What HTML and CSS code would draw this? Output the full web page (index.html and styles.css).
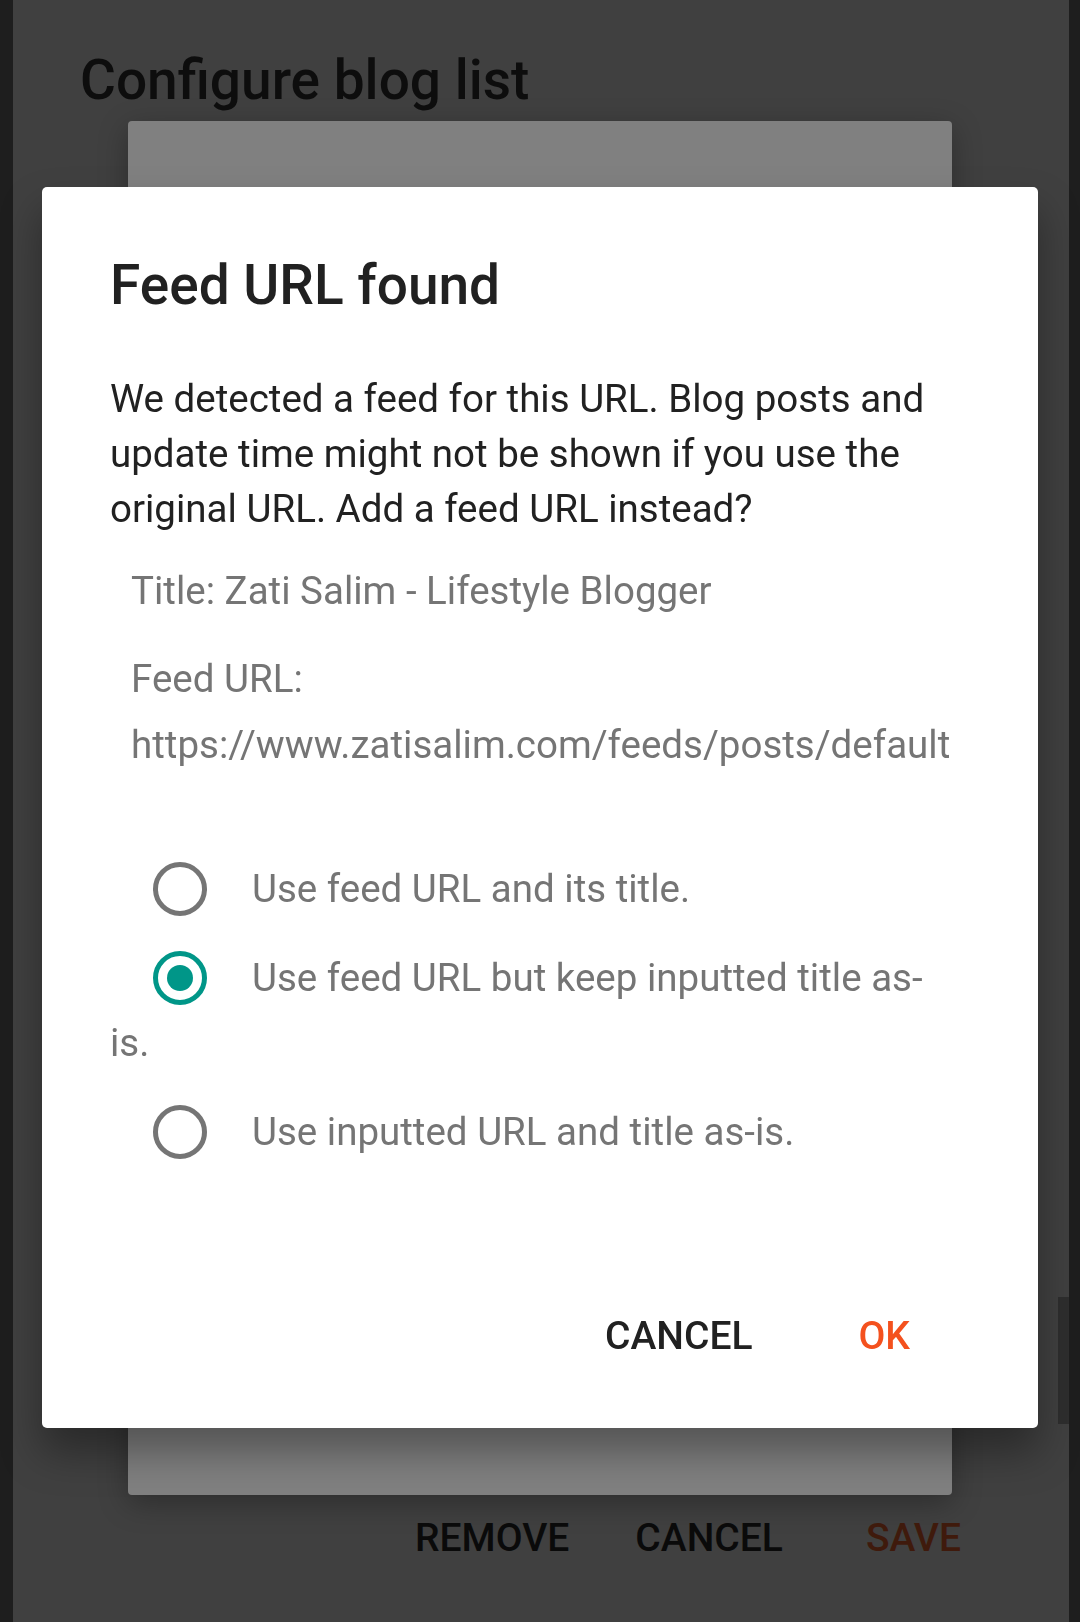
FILE: index.html
```html
<!DOCTYPE html>
<html lang="en">
  <head>
    <meta charset="UTF-8" />
    <meta name="viewport" content="width=device-width, initial-scale=1.0" />
    <title>Configure blog list</title>
    <link rel="stylesheet" href="styles.css">
  </head>
  <body>
    <main class="screen">
      <h1 class="screen-title">Configure blog list</h1>
      <div class="card"></div>
      <div class="screen-actions">
        <button class="btn">Remove</button>
        <button class="btn">Cancel</button>
        <button class="btn save">Save</button>
      </div>
      <div class="scrollbar"></div>
    </main>

    <div class="modal">
      <div class="dialog">
        <h2>Feed URL found</h2>
        <p class="message">
          We detected a feed for this URL. Blog posts and update time might not be shown if you use the original URL. Add a feed URL instead?
        </p>
        <div class="info">
          <p>Title: Zati Salim - Lifestyle Blogger</p>
          <p>Feed URL:<br />https://www.zatisalim.com/feeds/posts/default</p>
        </div>
        <div class="options">
          <label class="option"><span class="radio"></span>Use feed URL and its title.</label>
          <label class="option"><span class="radio checked"></span>Use feed URL but keep inputted title as-is.</label>
          <label class="option"><span class="radio"></span>Use inputted URL and title as-is.</label>
        </div>
        <div class="actions">
          <button class="btn">Cancel</button>
          <button class="btn ok">OK</button>
        </div>
      </div>
    </div>
  </body>
</html>
```

FILE: styles.css
```css
body {
  margin: 0;
  background-color: #1e1e1e;
  padding: 0 11px 0 13px;
  font-family: Roboto, "Liberation Sans", sans-serif;
}
.screen {
  background-color: #404040;
  height: 1622px;
  position: relative;
  overflow: hidden;
}
.screen-title {
  margin: 0;
  padding: 46px 0 0 67px;
  font-size: 55px;
  font-weight: 500;
  line-height: 68px;
  color: #0d0d0d;
}
.card {
  margin: 7px 0 0 115px;
  width: 824px;
  height: 1374px;
  background-color: #808080;
  border-radius: 4px;
  box-shadow: 0 8px 30px rgba(0, 0, 0, 0.3);
}
.screen-actions {
  display: flex;
  justify-content: flex-end;
  gap: 66px;
  padding: 20px 108px 0 0;
}
.btn {
  background: none;
  border: none;
  padding: 0;
  font-family: inherit;
  font-size: 39px;
  font-weight: 500;
  line-height: 46px;
  text-transform: uppercase;
  color: #0a0a0a;
}
.save {
  margin-left: 17px;
  color: #3f1a0c;
}
.scrollbar {
  position: absolute;
  right: 0;
  top: 1297px;
  width: 11px;
  height: 127px;
  background-color: #2e2e2e;
}

.modal {
  position: fixed;
  top: 0;
  left: 0;
  width: 100vw;
  height: 100vh;
  display: flex;
  justify-content: center;
  align-items: flex-start;
}
.dialog {
  margin-top: 187px;
  width: 996px;
  height: 1241px;
  box-sizing: border-box;
  padding: 66px 68px 0;
  background-color: white;
  border-radius: 5px;
  box-shadow: 0 24px 40px rgba(0, 0, 0, 0.35);
}
.dialog h2 {
  margin: 0;
  font-size: 55px;
  font-weight: 500;
  line-height: 64px;
  color: #212121;
}
.message {
  margin: 54px 0 0;
  font-size: 38.5px;
  line-height: 55px;
  color: #212121;
}
.info {
  margin-top: 22px;
  padding-left: 21px;
  color: #757575;
  font-size: 38.5px;
  line-height: 66px;
}
.info p {
  margin: 0 0 22px;
}
.options {
  margin-top: 66px;
  padding-right: 30px;
}
.option {
  display: block;
  padding: 12px 0;
  font-size: 38.5px;
  line-height: 65px;
  color: #757575;
}
.radio {
  display: inline-block;
  vertical-align: middle;
  box-sizing: border-box;
  width: 54px;
  height: 54px;
  margin: -6px 45px 0 43px;
  border: 5px solid #757575;
  border-radius: 50%;
  position: relative;
}
.radio.checked {
  border-color: #009688;
}
.radio.checked::after {
  content: "";
  position: absolute;
  top: 9px;
  left: 9px;
  width: 26px;
  height: 26px;
  border-radius: 50%;
  background-color: #009688;
}
.actions {
  display: flex;
  justify-content: flex-end;
  gap: 106px;
  margin-top: 128px;
  padding-right: 60px;
}
.actions .btn {
  line-height: 64px;
  color: #212121;
}
.actions .ok {
  color: #f4511e;
}
```
